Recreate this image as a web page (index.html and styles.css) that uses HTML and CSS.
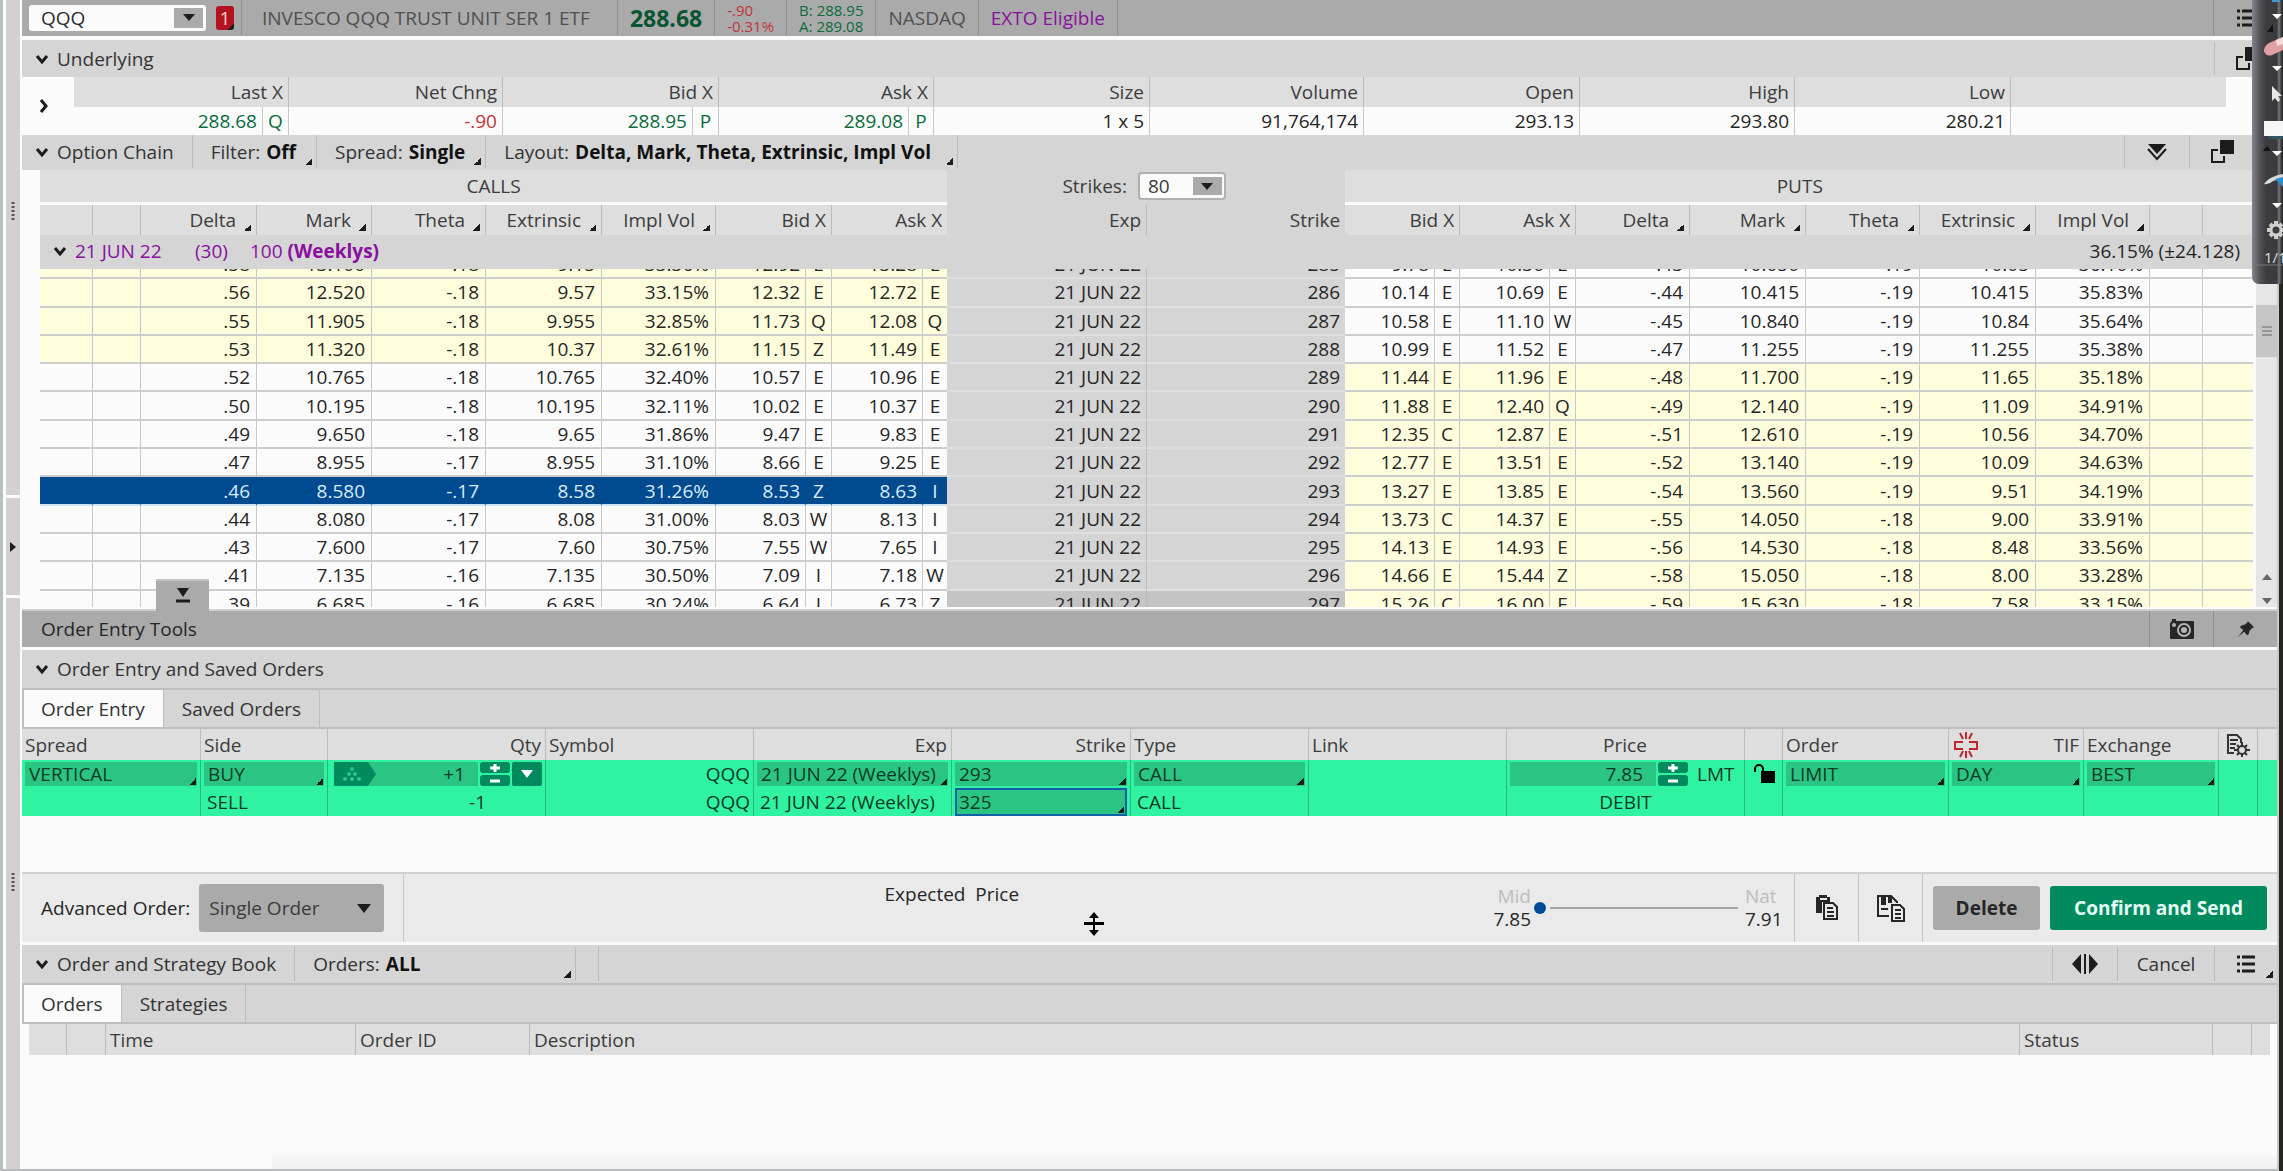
FILE: index.html
```html
<!DOCTYPE html>
<html lang="en">
<head>
<meta charset="utf-8">
<title>QQQ - Option Chain</title>
<link rel="stylesheet" href="styles.css">
</head>
<body>
<svg class="defs" aria-hidden="true">
  <symbol id="chev" viewBox="0 0 14 14"><path d="M2 4l5 6 5-6" fill="none" stroke="#1c1c1c" stroke-width="3"/></symbol>
  <symbol id="list" viewBox="0 0 18 18"><path d="M0 2h3M5 2h13M0 9h3M5 9h13M0 16h3M5 16h13" stroke="#1c1c1c" stroke-width="3"/></symbol>
  <symbol id="popout" viewBox="0 0 24 24"><path d="M10 0h14v14H10z" fill="#1c1c1c"/><path d="M8 10H2v12h12v-6" fill="none" stroke="#1c1c1c" stroke-width="2"/></symbol>
  <symbol id="dots" viewBox="0 0 4 18"><path d="M2 0v18" stroke="#555" stroke-width="3" stroke-dasharray="2 2"/></symbol>
</svg>

<div class="app">
  <aside class="rail">
    <div class="rail-top"><svg width="4" height="18"><use href="#dots"/></svg></div>
    <button class="rail-toggle" aria-label="Expand sidebar"><svg width="6" height="10" viewBox="0 0 6 10"><path d="M0 0l6 5-6 5z" fill="#1c1c1c"/></svg></button>
    <div class="rail-bottom"><svg width="4" height="18"><use href="#dots"/></svg></div>
  </aside>

  <main class="main">
    <header class="quote">
      <div class="quote-symbol">
        <select class="symbol-select" aria-label="Symbol"><option>QQQ</option></select>
        <button class="badge">1</button>
      </div>
      <div class="quote-cell name">INVESCO QQQ TRUST UNIT SER 1 ETF</div>
      <div class="quote-cell last">288.68</div>
      <div class="quote-cell stack down"><span>-.90</span><span>-0.31%</span></div>
      <div class="quote-cell stack up"><span>B: 288.95</span><span>A: 289.08</span></div>
      <div class="quote-cell">NASDAQ</div>
      <div class="quote-cell purple">EXTO Eligible</div>
      <div class="spacer"></div>
      <button class="quote-menu" aria-label="Menu"><svg width="18" height="18"><use href="#list"/></svg></button>
    </header>

    <section>
      <div class="bar">
        <button class="toggle"><svg width="14" height="14"><use href="#chev"/></svg>Underlying</button>
        <div class="spacer"></div>
        <button class="bar-end under-pop" aria-label="Detach"><svg width="24" height="24"><use href="#popout"/></svg></button>
      </div>
      <div class="underlying">
        <button class="expand" aria-label="Expand"><svg width="10" height="14" viewBox="0 0 10 14"><path d="M2 1l5 6-5 6" fill="none" stroke="#1c1c1c" stroke-width="3"/></svg></button>
        <table class="grid under-table">
          <colgroup><col width="189"><col width="26"><col width="214"><col width="190"><col width="26"><col width="190"><col width="25"><col width="216"><col width="214"><col width="216"><col width="215"><col width="216"><col width="215"></colgroup>
          <thead><tr><th colspan="2">Last X</th><th>Net Chng</th><th colspan="2">Bid X</th><th colspan="2">Ask X</th><th>Size</th><th>Volume</th><th>Open</th><th>High</th><th>Low</th><th class="bare"></th></tr></thead>
          <tbody><tr><td class="up">288.68</td><td class="ex up">Q</td><td class="down">-.90</td><td class="up">288.95</td><td class="ex up">P</td><td class="up">289.08</td><td class="ex up">P</td><td>1 x 5</td><td>91,764,174</td><td>293.13</td><td>293.80</td><td>280.21</td><td class="bare"></td></tr></tbody>
        </table>
      </div>
    </section>

    <section class="chain">
      <div class="bar slim">
        <button class="toggle sep">
          <svg width="14" height="14"><use href="#chev"/></svg>Option Chain</button>
        <button class="filter">Filter: <b>Off</b></button>
        <button class="filter">Spread: <b>Single</b></button>
        <button class="filter layout">Layout: <b>Delta, Mark, Theta, Extrinsic, Impl Vol</b></button>
        <div class="spacer"></div>
        <button class="bar-end collapse" aria-label="Collapse all"><svg width="24" height="18" viewBox="0 0 24 18"><path d="M3 1h18l-9 10z" fill="#1c1c1c"/><path d="M3 6l9 10 9-10" fill="none" stroke="#1c1c1c" stroke-width="2"/></svg></button>
        <button class="bar-end chain-pop" aria-label="Detach"><svg width="24" height="24"><use href="#popout"/></svg></button>
      </div>

      <div class="chain-head">
        <table class="grid chain-table head">
          <colgroup><col width="53"><col width="48"><col width="116"><col width="115"><col width="114"><col width="116"><col width="114"><col width="90"><col width="26"><col width="91"><col width="24"><col width="200"><col width="198"><col width="90"><col width="25"><col width="90"><col width="26"><col width="114"><col width="116"><col width="114"><col width="116"><col width="114"><col width="53"><col width="51"></colgroup>
          <thead>
            <tr class="sides"><th colspan="11">CALLS</th><th colspan="2" class="mid"><label for="strikes">Strikes:</label><select id="strikes"><option>80</option></select></th><th colspan="11">PUTS</th></tr>
            <tr class="names"><th></th><th></th><th class="s">Delta</th><th class="s">Mark</th><th class="s">Theta</th><th class="s">Extrinsic</th><th class="s">Impl Vol</th><th colspan="2">Bid X</th><th colspan="2" class="bare">Ask X</th><th class="mid">Exp</th><th class="mid bare">Strike</th><th colspan="2">Bid X</th><th colspan="2">Ask X</th><th class="s">Delta</th><th class="s">Mark</th><th class="s">Theta</th><th class="s">Extrinsic</th><th class="s">Impl Vol</th><th></th><th class="bare"></th></tr>
          </thead>
        </table>
        <div class="expiry">
          <button class="expiry-toggle"><svg width="14" height="14"><use href="#chev"/></svg><span class="date">21 JUN 22</span><span class="days">(30)</span><span>100 <b>(Weeklys)</b></span></button>
          <span class="expiry-vol">36.15% (±24.128)</span>
        </div>
      </div>

      <div class="chain-body">
        <div class="chain-view">
          <table class="grid chain-table body">
            <colgroup><col width="53"><col width="48"><col width="116"><col width="115"><col width="114"><col width="116"><col width="114"><col width="90"><col width="26"><col width="91"><col width="24"><col width="200"><col width="198"><col width="90"><col width="25"><col width="90"><col width="26"><col width="114"><col width="116"><col width="114"><col width="116"><col width="114"><col width="53"><col width="51"></colgroup>
            <tbody>
              <tr class="itm-call"><td></td><td></td><td>.58</td><td>13.100</td><td>-.18</td><td>9.15</td><td>33.36%</td><td>12.92</td><td class="ex">E</td><td>13.28</td><td class="ex bare">E</td><td class="mid">21 JUN 22</td><td class="mid bare">285</td><td>9.78</td><td class="ex">E</td><td>10.30</td><td class="ex">E</td><td>-.43</td><td>10.050</td><td>-.19</td><td>10.05</td><td>36.10%</td><td></td><td class="bare"></td></tr>
              <tr class="itm-call"><td></td><td></td><td>.56</td><td>12.520</td><td>-.18</td><td>9.57</td><td>33.15%</td><td>12.32</td><td class="ex">E</td><td>12.72</td><td class="ex bare">E</td><td class="mid">21 JUN 22</td><td class="mid bare">286</td><td>10.14</td><td class="ex">E</td><td>10.69</td><td class="ex">E</td><td>-.44</td><td>10.415</td><td>-.19</td><td>10.415</td><td>35.83%</td><td></td><td class="bare"></td></tr>
              <tr class="itm-call"><td></td><td></td><td>.55</td><td>11.905</td><td>-.18</td><td>9.955</td><td>32.85%</td><td>11.73</td><td class="ex">Q</td><td>12.08</td><td class="ex bare">Q</td><td class="mid">21 JUN 22</td><td class="mid bare">287</td><td>10.58</td><td class="ex">E</td><td>11.10</td><td class="ex">W</td><td>-.45</td><td>10.840</td><td>-.19</td><td>10.84</td><td>35.64%</td><td></td><td class="bare"></td></tr>
              <tr class="itm-call"><td></td><td></td><td>.53</td><td>11.320</td><td>-.18</td><td>10.37</td><td>32.61%</td><td>11.15</td><td class="ex">Z</td><td>11.49</td><td class="ex bare">E</td><td class="mid">21 JUN 22</td><td class="mid bare">288</td><td>10.99</td><td class="ex">E</td><td>11.52</td><td class="ex">E</td><td>-.47</td><td>11.255</td><td>-.19</td><td>11.255</td><td>35.38%</td><td></td><td class="bare"></td></tr>
              <tr class="itm-put"><td></td><td></td><td>.52</td><td>10.765</td><td>-.18</td><td>10.765</td><td>32.40%</td><td>10.57</td><td class="ex">E</td><td>10.96</td><td class="ex bare">E</td><td class="mid">21 JUN 22</td><td class="mid bare">289</td><td>11.44</td><td class="ex">E</td><td>11.96</td><td class="ex">E</td><td>-.48</td><td>11.700</td><td>-.19</td><td>11.65</td><td>35.18%</td><td></td><td class="bare"></td></tr>
              <tr class="itm-put"><td></td><td></td><td>.50</td><td>10.195</td><td>-.18</td><td>10.195</td><td>32.11%</td><td>10.02</td><td class="ex">E</td><td>10.37</td><td class="ex bare">E</td><td class="mid">21 JUN 22</td><td class="mid bare">290</td><td>11.88</td><td class="ex">E</td><td>12.40</td><td class="ex">Q</td><td>-.49</td><td>12.140</td><td>-.19</td><td>11.09</td><td>34.91%</td><td></td><td class="bare"></td></tr>
              <tr class="itm-put"><td></td><td></td><td>.49</td><td>9.650</td><td>-.18</td><td>9.65</td><td>31.86%</td><td>9.47</td><td class="ex">E</td><td>9.83</td><td class="ex bare">E</td><td class="mid">21 JUN 22</td><td class="mid bare">291</td><td>12.35</td><td class="ex">C</td><td>12.87</td><td class="ex">E</td><td>-.51</td><td>12.610</td><td>-.19</td><td>10.56</td><td>34.70%</td><td></td><td class="bare"></td></tr>
              <tr class="itm-put"><td></td><td></td><td>.47</td><td>8.955</td><td>-.17</td><td>8.955</td><td>31.10%</td><td>8.66</td><td class="ex">E</td><td>9.25</td><td class="ex bare">E</td><td class="mid">21 JUN 22</td><td class="mid bare">292</td><td>12.77</td><td class="ex">E</td><td>13.51</td><td class="ex">E</td><td>-.52</td><td>13.140</td><td>-.19</td><td>10.09</td><td>34.63%</td><td></td><td class="bare"></td></tr>
              <tr class="itm-put picked"><td></td><td></td><td>.46</td><td>8.580</td><td>-.17</td><td>8.58</td><td>31.26%</td><td>8.53</td><td class="ex">Z</td><td>8.63</td><td class="ex bare">I</td><td class="mid">21 JUN 22</td><td class="mid bare">293</td><td>13.27</td><td class="ex">E</td><td>13.85</td><td class="ex">E</td><td>-.54</td><td>13.560</td><td>-.19</td><td>9.51</td><td>34.19%</td><td></td><td class="bare"></td></tr>
              <tr class="itm-put"><td></td><td></td><td>.44</td><td>8.080</td><td>-.17</td><td>8.08</td><td>31.00%</td><td>8.03</td><td class="ex">W</td><td>8.13</td><td class="ex bare">I</td><td class="mid">21 JUN 22</td><td class="mid bare">294</td><td>13.73</td><td class="ex">C</td><td>14.37</td><td class="ex">E</td><td>-.55</td><td>14.050</td><td>-.18</td><td>9.00</td><td>33.91%</td><td></td><td class="bare"></td></tr>
              <tr class="itm-put"><td></td><td></td><td>.43</td><td>7.600</td><td>-.17</td><td>7.60</td><td>30.75%</td><td>7.55</td><td class="ex">W</td><td>7.65</td><td class="ex bare">I</td><td class="mid">21 JUN 22</td><td class="mid bare">295</td><td>14.13</td><td class="ex">E</td><td>14.93</td><td class="ex">E</td><td>-.56</td><td>14.530</td><td>-.18</td><td>8.48</td><td>33.56%</td><td></td><td class="bare"></td></tr>
              <tr class="itm-put"><td></td><td></td><td>.41</td><td>7.135</td><td>-.16</td><td>7.135</td><td>30.50%</td><td>7.09</td><td class="ex">I</td><td>7.18</td><td class="ex bare">W</td><td class="mid">21 JUN 22</td><td class="mid bare">296</td><td>14.66</td><td class="ex">E</td><td>15.44</td><td class="ex">Z</td><td>-.58</td><td>15.050</td><td>-.18</td><td>8.00</td><td>33.28%</td><td></td><td class="bare"></td></tr>
              <tr class="itm-put current"><td></td><td></td><td>.39</td><td>6.685</td><td>-.16</td><td>6.685</td><td>30.24%</td><td>6.64</td><td class="ex">I</td><td>6.73</td><td class="ex bare">Z</td><td class="mid">21 JUN 22</td><td class="mid bare">297</td><td>15.26</td><td class="ex">C</td><td>16.00</td><td class="ex">E</td><td>-.59</td><td>15.630</td><td>-.18</td><td>7.58</td><td>33.15%</td><td></td><td class="bare"></td></tr>
            </tbody>
          </table>
        </div>
        <div class="scroll">
          <div class="scroll-thumb"><svg width="10" height="10" viewBox="0 0 10 10"><path d="M0 1h10M0 5h10M0 9h10" stroke="#666" stroke-width="1"/></svg></div>
          <div class="spacer"></div>
          <svg width="10" height="30" viewBox="0 0 10 30"><path d="M0 6l5-6 5 6zM0 24h10l-5 6z" fill="#666"/></svg>
        </div>
        <button class="drawer" aria-label="Collapse panel"><svg width="14" height="16" viewBox="0 0 14 16"><path d="M1 0h12L7 9z" fill="#1c1c1c"/><path d="M0 13h14" stroke="#1c1c1c" stroke-width="3"/></svg></button>
      </div>
    </section>

    <section class="tools">
      <h2>Order Entry Tools</h2>
      <div class="spacer"></div>
      <button class="camera" aria-label="Snapshot"><svg width="24" height="20" viewBox="0 0 24 20"><path d="M0 4l2-2V0h4v2h17l1 1v16l-1 1H1l-1-1z" fill="#262626"/><circle cx="14" cy="11" r="6" fill="none" stroke="#b4b4b4" stroke-width="2"/><circle cx="14" cy="11" r="3" fill="#b4b4b4"/><circle cx="4" cy="6" r="2" fill="#b4b4b4"/></svg></button>
      <button class="pin" aria-label="Pin"><svg width="16" height="16" viewBox="0 0 18 18"><path d="M11 0l7 7-2 1-3 3-1 4-2 1-3-4-7 6 6-8-4-3 2-2 4-1 3-3z" fill="#262626"/></svg></button>
    </section>

    <section class="entry">
      <div class="bar tall"><button class="toggle"><svg width="14" height="14"><use href="#chev"/></svg>Order Entry and Saved Orders</button></div>
      <nav class="tabs"><button class="tab on">Order Entry</button><button class="tab">Saved Orders</button></nav>
      <table class="grid order-table">
        <colgroup><col width="179"><col width="127"><col width="218"><col width="208"><col width="198"><col width="179"><col width="178"><col width="198"><col width="238"><col width="38"><col width="166"><col width="135"><col width="135"><col width="39"><col width="19"></colgroup>
        <thead><tr>
          <th>Spread</th><th>Side</th><th class="r">Qty</th><th>Symbol</th><th class="r">Exp</th><th class="r">Strike</th><th>Type</th><th>Link</th><th class="c">Price</th><th></th><th>Order</th>
          <th><span class="tif"><svg width="28" height="26" viewBox="0 0 28 26"><path d="M11 10H3v7h8M17 10h8v7h-8" fill="none" stroke="#c0262c" stroke-width="2"/><path d="M14 0v7M8 1l3 6M20 1l-3 6M14 19v7M8 25l3-6M20 25l-3-6" stroke="#c0262c" stroke-width="2"/></svg>TIF</span></th>
          <th>Exchange</th>
          <th class="c"><svg class="cfg" width="24" height="24" viewBox="0 0 24 24"><path d="M8 20H2V2h9l4 4v4M4 7h8M4 11h6M4 15h5" fill="none" stroke="#333" stroke-width="2"/><circle cx="16" cy="17" r="4" fill="none" stroke="#333" stroke-width="2"/><path d="M16 9v4M16 21v3M8 17h4M20 17h4M11 12l2 2M19 20l2 2M21 12l-2 2M13 20l-2 2" stroke="#333" stroke-width="2"/></svg></th>
          <th class="bare"></th>
        </tr></thead>
        <tbody>
          <tr>
            <td><select aria-label="Spread"><option>VERTICAL</option></select></td>
            <td><select aria-label="Side"><option>BUY</option></select></td>
            <td><div class="qty"><button class="hex" aria-label="Position size"><svg width="20" height="16" viewBox="0 0 20 16" fill="#2bc88a"><circle cx="10" cy="3" r="2"/><circle cx="7" cy="8" r="2"/><circle cx="13" cy="8" r="2"/><circle cx="3" cy="13" r="2"/><circle cx="10" cy="13" r="2"/><circle cx="17" cy="13" r="2"/></svg></button><input value="+1" aria-label="Quantity"><span class="step"><button aria-label="More"><svg width="10" height="8" viewBox="0 0 10 8"><path d="M0 4h10M5 0v8" stroke="#fff" stroke-width="3"/></svg></button><button aria-label="Less"><svg width="10" height="8" viewBox="0 0 10 8"><path d="M0 4h10" stroke="#fff" stroke-width="3"/></svg></button></span><button class="more" aria-label="Quantity presets"><svg width="12" height="8" viewBox="0 0 12 8"><path d="M0 0h12L6 8z" fill="#fff"/></svg></button></div></td>
            <td class="r">QQQ</td>
            <td><select aria-label="Expiration"><option>21 JUN 22 (Weeklys)</option></select></td>
            <td><select aria-label="Strike"><option>293</option></select></td>
            <td><select aria-label="Type"><option>CALL</option></select></td>
            <td></td>
            <td><div class="price"><input value="7.85" aria-label="Price"><span class="step"><button aria-label="More"><svg width="10" height="8" viewBox="0 0 10 8"><path d="M0 4h10M5 0v8" stroke="#fff" stroke-width="3"/></svg></button><button aria-label="Less"><svg width="10" height="8" viewBox="0 0 10 8"><path d="M0 4h10" stroke="#fff" stroke-width="3"/></svg></button></span><span class="lmt">LMT</span></div></td>
            <td class="c"><svg class="lock" width="22" height="20" viewBox="0 0 22 20"><path d="M8 7h14v12H8z"/><path d="M2 8V5a4 4 0 0 1 8 0v3" fill="none" stroke="#000" stroke-width="2"/></svg></td>
            <td><select aria-label="Order"><option>LIMIT</option></select></td>
            <td><select aria-label="Time in force"><option>DAY</option></select></td>
            <td><select aria-label="Exchange"><option>BEST</option></select></td>
            <td></td><td class="bare"></td>
          </tr>
          <tr>
            <td></td><td><span class="plain">SELL</span></td><td class="r leg-qty">-1</td><td class="r">QQQ</td><td><span class="plain">21 JUN 22 (Weeklys)</span></td>
            <td><select class="focus" aria-label="Strike"><option>325</option></select></td><td><span class="plain">CALL</span></td><td></td><td class="c">DEBIT</td><td></td><td></td><td></td><td></td><td></td><td class="bare"></td>
          </tr>
        </tbody>
      </table>
    </section>

    <footer class="actions">
      <div class="advanced"><label for="adv">Advanced Order:</label><select id="adv"><option>Single Order</option></select></div>
      <div class="expected">Expected&nbsp; Price</div>
      <div class="range">
        <div class="range-end"><span>Mid</span><b>7.85</b></div>
        <input type="range" min="0" max="6" value="0" aria-label="Price between mid and natural">
        <div class="range-end left"><span>Nat</span><b>7.91</b></div>
      </div>
      <button class="tool" aria-label="Copy order"><svg width="24" height="26" viewBox="0 0 24 26"><path d="M1 2h3V0h8v2h3v5H7v11H1z" fill="#262626"/><path d="M5 4h7" stroke="#eaeaea" stroke-width="2"/><path d="M9 8h9l4 4v12H9z" fill="#eaeaea" stroke="#262626" stroke-width="2"/><path d="M12 13h6M12 17h7M12 21h7" stroke="#262626" stroke-width="2"/></svg></button>
      <button class="tool" aria-label="Save order"><svg width="28" height="27" viewBox="0 0 28 27"><path d="M12 21H1V1h13l6 6v1" fill="none" stroke="#262626" stroke-width="2"/><path d="M4 1h5v9H4zM11 1h4v7h-4zM4 13h7v2H4z" fill="#262626"/><path d="M15 10h8l4 4v12H15z" fill="#eaeaea" stroke="#262626" stroke-width="2"/><path d="M18 15h6M18 19h6M18 23h6" stroke="#262626" stroke-width="2"/></svg></button>
      <div class="submit"><button class="delete">Delete</button><button class="send">Confirm and Send</button></div>
    </footer>

    <section class="book">
      <div class="bar tall">
        <button class="toggle sep"><svg width="14" height="14"><use href="#chev"/></svg>Order and Strategy Book</button>
        <button class="filter wide">Orders: <b>ALL</b></button>
        <span class="gap"></span>
        <div class="spacer"></div>
        <button class="bar-end split" aria-label="Resize columns"><svg width="26" height="20" viewBox="0 0 26 20"><path d="M9 0v20L0 10zM17 0v20l9-10z" fill="#1c1c1c"/><path d="M13 0v20" stroke="#1c1c1c" stroke-width="2"/></svg></button>
        <button class="bar-end cancel">Cancel</button>
        <button class="bar-end book-menu" aria-label="Menu"><svg width="18" height="18"><use href="#list"/></svg></button>
      </div>
      <nav class="tabs"><button class="tab on">Orders</button><button class="tab">Strategies</button></nav>
      <table class="grid book-table">
        <colgroup><col width="38"><col width="39"><col width="250"><col width="174"><col width="1490"><col width="193"><col width="39"><col width="18"></colgroup>
        <thead><tr><th></th><th></th><th>Time</th><th>Order ID</th><th>Description</th><th>Status</th><th></th><th class="bare"></th></tr></thead>
      </table>
      <div class="shade"></div>
    </section>
  </main>
</div>

<aside class="palette" aria-label="Drawing tools">
  <svg width="31" height="284" viewBox="0 0 31 284">
    <path d="M20 0h8v2h-8z" fill="#3f9bd0"/>
    <path d="M20 14h10l-5 5zM20 66h10l-5 5zM20 151h10l-5 5zM20 203h10l-5 5z" fill="#fff"/>
    <path d="M15 32l6-8v8zM11 151l4-5 4 5z" fill="#111"/>
    <path d="M31 37l-14 6q-5 3-5 8 2 6 8 4l11-5z" fill="#dfa0a4"/><path d="M31 37l-7 3 1 6 6-2z" fill="#f3dcd8"/>
    <path d="M20 86v15l3-3 3 4 2-2-2-4h4z" fill="#e8e8e8"/>
    <path d="M12 121h19v15H12z" fill="#f6f6f6"/><path d="M16 136h15v3H16z" fill="#2f5561"/>
    <path d="M12 184q4-6 14-9l5-1v4l-10 3q-4 4-9 3z" fill="#d8dcdf"/><path d="M23 179l8-2v10z" fill="#2d8fc7"/>
    <path d="M24 221v18M15 230h16M18 224l3 3M18 236l3-3M30 224l-3 3M30 236l-3-3" stroke="#cfcfcf" stroke-width="4"/><circle cx="24" cy="230" r="5" fill="#3c3b3f" stroke="#cfcfcf" stroke-width="3"/>
    <path d="M0 265h31" stroke="#777" stroke-width="1"/>
  </svg>
  <span class="page">1/1</span>
</aside>
<svg class="cursor" width="20" height="24" viewBox="0 0 20 24"><path d="M10 0l5 6h-4v4h9v3h-9v5h4l-5 6-5-6h4v-5H0v-3h9V6H5z" fill="#000"/></svg>
</body>
</html>
```
FILE: styles.css
```css
:root {
  --bar: #d5d5d5;
  --head: #dedede;
  --dark: #aaaaaa;
  --paper: #fbfbfb;
  --line: #bebebe;
  --tick: linear-gradient(135deg, transparent 50%, #1c1c1c 50%);
}

* { box-sizing: border-box; }

body {
  margin: 0;
  background: #26261f;
  color: #262626;
  font: 19px/24px "Open Sans", "Noto Sans", sans-serif;
  position: relative;
  overflow: hidden;
}

button, select, input {
  font: inherit;
  color: inherit;
  margin: 0;
  padding: 0;
  border: 0;
  border-radius: 0;
  background: none;
  appearance: none;
  text-align: left;
  min-width: 0;
}

button { display: flex; align-items: center; white-space: nowrap; }
h2 { margin: 0; font: inherit; }
svg { display: block; flex: none; }
.defs { position: absolute; width: 0; height: 0; }
.spacer { flex: 1; }
.up { color: #0a6b3c; }
.down { color: #c0343a; }

.app {
  display: flex;
  min-height: 100vh;
  margin-right: 4px;
  background: var(--paper);
  border-right: 2px solid #c9c9c9;
  border-bottom: 2px solid #b9bcbd;
}

/* Left rail */
.rail {
  flex: none;
  width: 22px;
  display: flex;
  flex-direction: column;
  gap: 3px;
  padding: 0 2px;
  border-left: 3px solid #b9c0c4;
  border-right: 1px solid var(--paper);
  background: var(--paper);
}
.rail > * { background: #d2d0d0; justify-content: center; width: 14px; margin-left: 1px; }
.rail-top { height: 495px; display: flex; padding-top: 202px; }
.rail-toggle { height: 97px; }
.rail-bottom { flex: 1; display: flex; padding-top: 275px; }

.main { flex: 1; min-width: 0; display: flex; flex-direction: column; }

/* Quote bar */
.quote {
  display: flex;
  height: 40px;
  padding-bottom: 1px;
  background: var(--dark);
  border-bottom: 4px solid var(--paper);
  color: #505050;
}
.quote > * { border-right: 1px solid #8f8f8f; }
.quote-symbol { display: flex; align-items: center; gap: 10px; padding: 0 7px; width: 220px; }
.symbol-select {
  flex: 1;
  height: 26px;
  padding-left: 12px;
  color: #2b2b2b;
  border-radius: 3px;
  background:
    url("data:image/svg+xml,%3Csvg xmlns='http://www.w3.org/2000/svg' viewBox='0 0 12 7'%3E%3Cpath d='M0 0h12L6 7z' fill='%231c1c1c'/%3E%3C/svg%3E") right 11px center / 12px 7px no-repeat,
    linear-gradient(var(--dark), var(--dark)) right 3px center / 29px 20px no-repeat,
    var(--paper);
}
.badge { width: 18px; height: 24px; justify-content: center; border-radius: 3px; color: #f4d0d0; background: var(--tick) right bottom / 6px 6px no-repeat, #b3131e; }
.quote-cell { display: flex; align-items: center; padding: 0 12px; }
.name { padding: 0 27px 0 20px; }
.last { color: #0b5431; font-size: 23px; font-weight: 700; }
.quote .stack { flex-direction: column; align-items: flex-start; justify-content: center; padding: 0 12px; font-size: 15px; line-height: 16px; }
.purple { color: #8a0f9f; }
.spacer + .quote-menu { width: 63px; padding-left: 23px; border: 0; }

/* Section bars */
.bar { display: flex; height: 37px; background: var(--bar); color: #333; padding: 2px 0; }
.bar.slim { height: 35px; padding: 0 0 2px; }
.bar.tall { height: 40px; border-bottom: 2px solid var(--line); }
.toggle { gap: 8px; padding: 0 16px 0 13px; }
.sep { padding-right: 18px; border-right: 1px solid #bbb; }
.filter { gap: 6px; padding: 0 20px 0 18px; border-right: 1px solid #bbb; background: var(--tick) right 4px bottom 3px / 7px 7px no-repeat; }
.filter b { color: #111; }
.filter.layout { width: 472px; }
.filter.wide { width: 281px; }
.gap { width: 23px; border-right: 1px solid #bbb; }
.bar-end { justify-content: center; border-left: 1px solid #bbb; }
.under-pop { width: 63px; padding-left: 2px; }
.collapse { width: 65px; }
.chain-pop { width: 88px; padding-right: 24px; }
.split { width: 65px; }
.cancel { width: 97px; }
.book-menu { width: 63px; background: var(--tick) right 4px bottom 3px / 7px 7px no-repeat; }

/* Tables */
.grid { width: 100%; table-layout: fixed; border-collapse: separate; border-spacing: 0; }
.grid th, .grid td { padding: 0 5px; text-align: right; white-space: nowrap; overflow: hidden; border-right: 1px solid #c8c8c8; font-weight: 400; line-height: 24px; }
.grid th { background: var(--head); color: #3c3c3c; border-color: #bcbcbc; }
.grid .bare { border-right: 0; }
.grid .ex { padding: 0; text-align: center; }

.underlying { display: flex; padding-right: 51px; }
.expand { width: 52px; padding-left: 17px; }
.under-table { flex: 1; }
.under-table th { height: 30px; }
.under-table td { height: 28px; }

.chain-head { padding: 0 24px 0 18px; }
.chain-table .mid { background: var(--bar); }
.sides th { height: 35px; border-right: 0; border-bottom: 3px solid var(--paper); text-align: center; }
.sides .mid { border-bottom-color: var(--bar); padding-right: 9px; }
#strikes {
  width: 88px;
  height: 28px;
  margin-left: 11px;
  padding-left: 8px;
  border: 2px solid #b0b0b0;
  border-radius: 4px;
  background:
    url("data:image/svg+xml,%3Csvg xmlns='http://www.w3.org/2000/svg' viewBox='0 0 12 7'%3E%3Cpath d='M0 0h12L6 7z' fill='%231c1c1c'/%3E%3C/svg%3E") right 11px center / 12px 7px no-repeat,
    linear-gradient(var(--dark), var(--dark)) right 2px center / 29px 18px no-repeat,
    var(--paper);
}
.names th { height: 30px; }
.names .s { padding-right: 20px; background: var(--tick) right 5px bottom 4px / 7px 7px no-repeat, var(--head); }
.expiry { display: flex; justify-content: space-between; height: 34px; background: var(--bar); padding: 0 13px 2px; }
.expiry-toggle { gap: 8px; color: #8a0f9f; }
.expiry-toggle .date { width: 112px; }
.expiry-toggle .days { width: 47px; }
.expiry-vol { line-height: 32px; }

.chain-body { position: relative; display: flex; height: 342px; padding-left: 18px; border-bottom: 2px solid #cfcfcf; }
.chain-view { flex: 1; height: 338px; overflow: hidden; }
.chain-table.body { height: 368px; margin-top: -18px; }
.body td { border-bottom: 2px solid #cdcdcd; background: var(--paper); }
.body td:nth-child(-n+7), .body td:nth-child(n+18) { padding-right: 6px; }
.itm-call td:nth-child(-n+11), .itm-put td:nth-child(n+14) { background: #fffddc; }
.body td.mid { border-bottom-color: #dedede; }
.body td.mid:not(.bare) { border-right-color: #bbb; }
.body .current td.mid { background: #c4c4c4; }
.picked td:nth-child(-n+11) { background: #004a8f; color: #d9ecfa; border-right-color: #004a8f; border-bottom-color: #cfe3f2; }
.scroll { width: 24px; height: 338px; display: flex; flex-direction: column; align-items: center; padding: 36px 0 3px; background: #e6e6e6; border-left: 3px solid var(--paper); }
.scroll-thumb { width: 21px; height: 52px; display: flex; align-items: center; justify-content: center; background: #c6c6c6; }
.drawer { position: absolute; left: 134px; bottom: -2px; width: 53px; height: 32px; justify-content: center; background: var(--dark); border-top: 2px solid #c4c4c4; }

/* Order entry */
.tools { display: flex; align-items: stretch; height: 39px; padding-left: 19px; background: var(--dark); border-bottom: 3px solid var(--paper); }
.tools h2 { line-height: 36px; }
.tools button { justify-content: center; border-left: 1px solid #8f8f8f; width: 64px; }

.tabs { display: flex; height: 39px; background: var(--bar); border-bottom: 2px solid var(--line); color: #333; }
.tab { padding: 0 18px; border-right: 1px solid var(--line); }
.tab.on { background: var(--paper); border-left: 2px solid var(--line); padding-left: 17px; }

.entry { min-height: 222px; }
.order-table th, .order-table td { text-align: left; padding: 0 4px 0 3px; }
.order-table th { height: 31px; }
.grid.order-table .r { text-align: right; }
.grid.order-table .c { text-align: center; }
.order-table td { height: 28px; padding: 0 3px; background: #30f3a2; color: #0c3a26; border-right-color: #27b97d; }
.order-table .leg-qty { padding-right: 59px; }
.order-table .plain { padding-left: 3px; }
.order-table select { display: block; width: 100%; height: 24px; padding-left: 4px; background: var(--tick) right 1px bottom 1px / 7px 7px no-repeat, #2ac582; }
.order-table .focus { height: 28px; padding-left: 2px; border: 2px solid #1260a8; }
.order-table .cfg, .order-table .lock { margin: auto; }
.tif { display: flex; align-items: center; justify-content: space-between; }
.qty, .price { display: flex; gap: 2px; height: 24px; }
.qty input, .price input { flex: 1; width: 0; padding-right: 13px; text-align: right; background: #2ac582; }
.qty { margin-left: 3px; background: linear-gradient(#2ac582, #2ac582) left / 60px 100% no-repeat; }
.hex { width: 42px; padding-left: 8px; margin-right: -2px; background: #008a5e; clip-path: polygon(0 0, 34px 0, 100% 50%, 34px 100%, 0 100%); }
.step { display: flex; flex-direction: column; justify-content: space-between; width: 30px; }
.step button { height: 11px; justify-content: center; background: #008a5e; border-radius: 3px; }
.more { width: 30px; justify-content: center; background: #008a5e; border-radius: 2px; }
.lmt { width: 51px; padding-left: 7px; }

/* Action footer */
.actions { display: flex; height: 73px; background: #eaeaea; border-top: 2px solid #d0d0d0; border-bottom: 3px solid var(--paper); }
.advanced { display: flex; align-items: center; gap: 9px; padding: 0 19px; border-right: 1px solid #c6c6c6; }
#adv {
  width: 185px;
  height: 48px;
  padding-left: 10px;
  border-radius: 3px;
  color: #3a3a3a;
  background:
    url("data:image/svg+xml,%3Csvg xmlns='http://www.w3.org/2000/svg' viewBox='0 0 14 9'%3E%3Cpath d='M0 0h14L7 9z' fill='%231c1c1c'/%3E%3C/svg%3E") right 13px center / 14px 9px no-repeat,
    var(--dark);
}
.expected { flex: 1; text-align: center; padding: 8px 0 0 6px; }
.range { display: flex; align-items: center; gap: 3px; }
.range-end { display: flex; flex-direction: column; text-align: right; line-height: 23px; }
.range-end.left { text-align: left; width: 53px; padding-left: 4px; }
.range-end span { color: #bdbdbd; }
.range-end b { font-weight: 400; }
.range input { width: 204px; height: 16px; background: linear-gradient(#a6a6a6, #a6a6a6) right center / 188px 2px no-repeat; }
.range input::-webkit-slider-thumb { appearance: none; width: 12px; height: 12px; border-radius: 50%; background: #004a9a; }
.tool { width: 64px; justify-content: center; border-left: 1px solid #c6c6c6; }
.submit { display: flex; align-items: center; gap: 10px; padding: 0 10px; border-left: 1px solid #c6c6c6; }
.submit button { height: 44px; justify-content: center; border-radius: 3px; font-weight: 700; }
.submit .delete { width: 107px; background: var(--dark); }
.submit .send { width: 217px; background: #008a5e; color: #e6fff6; }

/* Order book */
.book { flex: 1; display: flex; flex-direction: column; }
.book-table { margin-left: 7px; width: calc(100% - 14px); }
.book-table th { height: 31px; text-align: left; padding: 0 4px; }
.shade { flex: 1; margin-left: 250px; background: linear-gradient(to top, #f0f0f0, var(--paper) 20px); }

/* Floating drawing palette, docked over the right edge */
.palette { position: absolute; top: 0; right: 0; width: 31px; height: 284px; border-radius: 0 0 0 7px; overflow: hidden; background: linear-gradient(90deg, #86838b, #5a575e 7px, #3c3b3f 14px, #3c3b3f 25px, #77757a 27px, #2a2a2a 30px); }
.page { position: absolute; left: 12px; top: 246px; color: #ddd; font-size: 15px; line-height: 22px; }
.cursor { position: absolute; left: 1084px; top: 912px; }
```
